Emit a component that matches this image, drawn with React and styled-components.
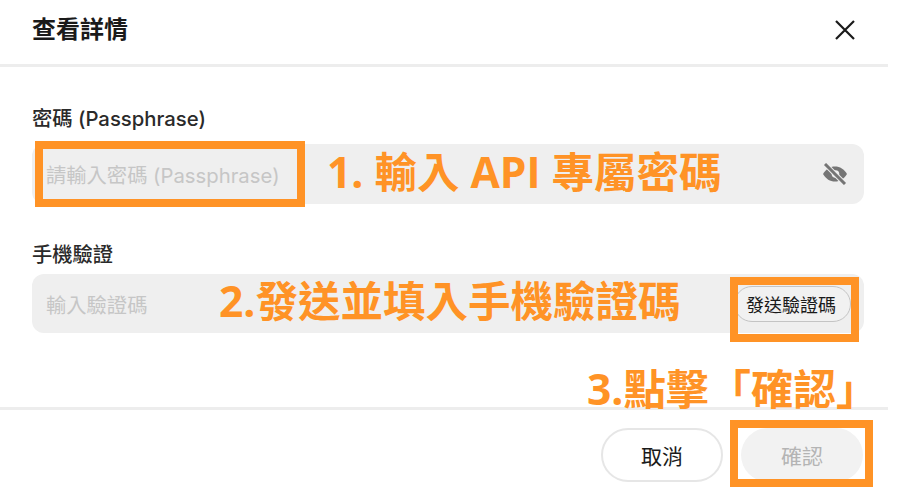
import styled, { createGlobalStyle } from 'styled-components';

const GlobalStyle = createGlobalStyle`
    html, body {
        margin: 0;
        padding: 0;
        background: #fff;
    }
    * {
        box-sizing: border-box;
    }
`;

const FONT = `Inter, "Noto Sans CJK TC", sans-serif`;
const ORANGE = '#ff9326';

const Page = styled.div`
    position: relative;
    width: 900px;
    height: 494px;
    overflow: hidden;
    background: #fff;
    font-family: ${FONT};
`;

const Dialog = styled.div`
    width: 888px;
    height: 494px;
    display: flex;
    flex-direction: column;
`;

const Header = styled.header`
    height: 67px;
    flex: none;
    padding: 0 31px 5px 32px;
    display: flex;
    align-items: center;
    justify-content: space-between;
    border-bottom: 3px solid #ededed;
`;

const Title = styled.h2`
    margin: 0;
    font-size: 24px;
    line-height: 32px;
    font-weight: 600;
    color: #1a1a1a;
`;

const CloseButton = styled.button`
    display: flex;
    padding: 0;
    border: 0;
    background: none;
    color: #1a1a1a;
`;

const Body = styled.div`
    flex: 1;
    padding: 38px 24px 0 32px;
    display: flex;
    flex-direction: column;
    gap: 37px;
`;

const Field = styled.div`
    display: flex;
    flex-direction: column;
    gap: ${(p) => p.$gap}px;
`;

const Label = styled.label`
    font-size: 20.3px;
    line-height: 28px;
    font-weight: 500;
    color: #2a2a2a;
`;

const InputBox = styled.div`
    height: ${(p) => p.$h}px;
    padding: 0 13px 0 14px;
    display: flex;
    align-items: center;
    justify-content: space-between;
    border-radius: 12px;
    background: #efefef;
`;

const Input = styled.input`
    flex: 1;
    min-width: 0;
    border: 0;
    outline: 0;
    padding: 3px 0 0;
    background: none;
    font-family: ${FONT};
    font-size: 20.3px;

    &::placeholder {
        color: #c6c6c6;
        opacity: 1;
    }
`;

const EyeButton = styled.button`
    display: flex;
    padding: 0;
    border: 0;
    background: none;
    margin-right: 3px;
    color: #757575;
`;

const SendButton = styled.button`
    height: 36px;
    width: 117px;
    padding: 0 3px 0 0;
    border: 1.5px solid #c4c4c4;
    border-radius: 18px;
    background: #f1f1f1;
    font-family: ${FONT};
    font-size: 18px;
    color: #1a1a1a;
`;

const Footer = styled.footer`
    height: 87px;
    flex: none;
    padding: 18px 25px 0 0;
    display: flex;
    justify-content: flex-end;
    gap: 18px;
    border-top: 3px solid #ededed;
`;

const FooterButton = styled.button`
    width: 122px;
    height: 54px;
    padding: 0;
    border-radius: 27px;
    border: ${(p) => (p.$disabled ? '0' : '2px solid #e6e6e6')};
    background: ${(p) => (p.$disabled ? '#f2f2f2' : '#fff')};
    color: ${(p) => (p.$disabled ? '#b4b4b4' : '#1a1a1a')};
    font-family: ${FONT};
    font-size: 21px;
`;

// Tutorial markup pasted over the dialog
const Highlight = styled.div`
    position: absolute;
    left: ${(p) => p.$x}px;
    top: ${(p) => p.$y}px;
    width: ${(p) => p.$w}px;
    height: ${(p) => p.$h}px;
    border: 8px solid ${ORANGE};
`;

const Note = styled.div`
    position: absolute;
    left: ${(p) => p.$x}px;
    top: ${(p) => p.$y}px;
    font-family: "Open Sans", "Noto Sans CJK TC", sans-serif;
    font-size: 42.5px;
    line-height: 48px;
    font-weight: 700;
    white-space: nowrap;
    color: ${ORANGE};
`;

function EyeOffIcon() {
    return (
        <svg width="26" height="22" viewBox="0 0 26 22" fill="none">
            <path
                d="M1 11C4 6 8 3.5 13 3.5S22 6 25 11C22 16 18 18.5 13 18.5S4 16 1 11Z"
                fill="currentColor"
            />
            <circle cx="13.5" cy="11" r="3.8" fill="#efefef" />
            <path d="M3 1 23 21" stroke="#efefef" strokeWidth="5" />
            <path d="M3 1 23 21" stroke="currentColor" strokeWidth="3" />
        </svg>
    );
}

function CloseIcon() {
    return (
        <svg width="24" height="24" viewBox="0 0 24 24" fill="none">
            <path d="M3 3 21 21M21 3 3 21" stroke="currentColor" strokeWidth="2.2" />
        </svg>
    );
}

export default function App() {
    return (
        <Page>
            <GlobalStyle />
            <Dialog>
                <Header>
                    <Title>查看詳情</Title>
                    <CloseButton>
                        <CloseIcon />
                    </CloseButton>
                </Header>
                <Body>
                    <Field $gap={11}>
                        <Label>密碼 (Passphrase)</Label>
                        <InputBox $h={60}>
                            <Input placeholder="請輸入密碼 (Passphrase)" />
                            <EyeButton>
                                <EyeOffIcon />
                            </EyeButton>
                        </InputBox>
                    </Field>
                    <Field $gap={5}>
                        <Label>手機驗證</Label>
                        <InputBox $h={59}>
                            <Input placeholder="輸入驗證碼" />
                            <SendButton>發送驗證碼</SendButton>
                        </InputBox>
                    </Field>
                </Body>
                <Footer>
                    <FooterButton>取消</FooterButton>
                    <FooterButton $disabled>確認</FooterButton>
                </Footer>
            </Dialog>

            <Highlight $x={35} $y={141} $w={270} $h={66} />
            <Highlight $x={730} $y={277} $w={129} $h={65} />
            <Highlight $x={730} $y={420} $w={143} $h={67} />

            <Note $x={327} $y={148}>1. 輸入 API 專屬密碼</Note>
            <Note $x={219} $y={277}>2.發送並填入手機驗證碼</Note>
            <Note $x={587} $y={365}>3.點擊「確認」</Note>
        </Page>
    );
}
